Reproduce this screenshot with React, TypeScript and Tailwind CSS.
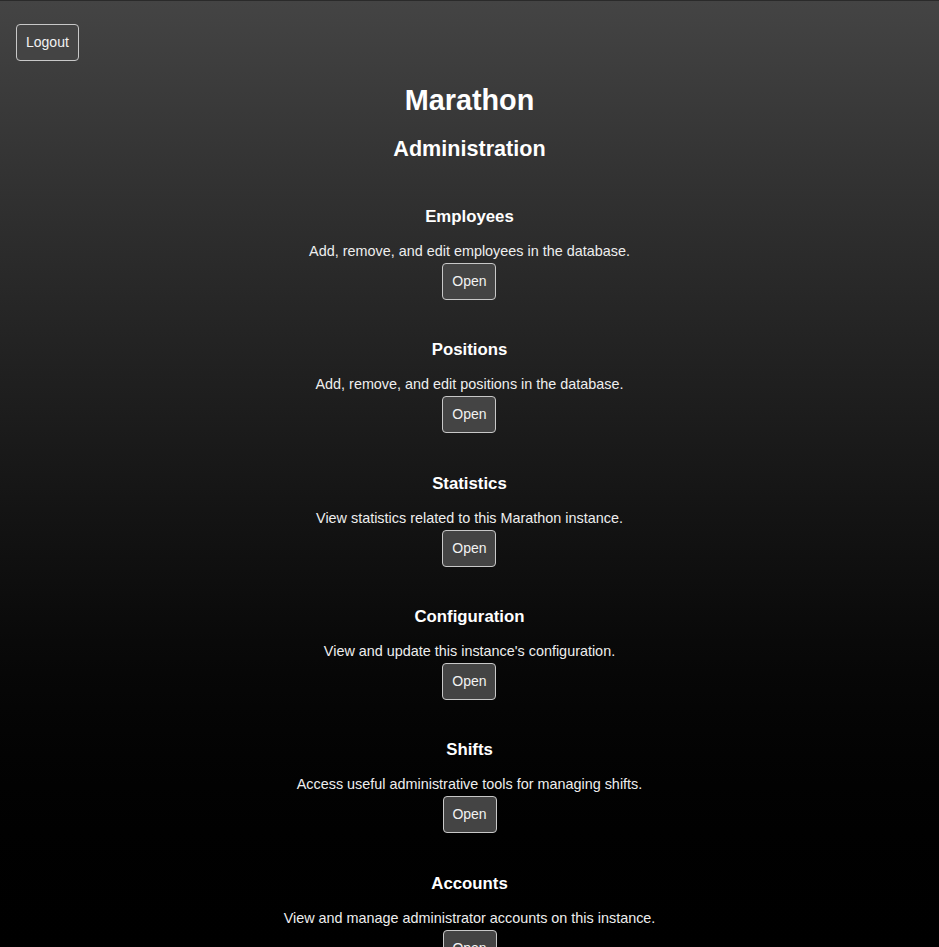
import React from 'react';

type Tool = {
  title: string;
  description: string;
};

const tools: Tool[] = [
  { title: 'Employees', description: 'Add, remove, and edit employees in the database.' },
  { title: 'Positions', description: 'Add, remove, and edit positions in the database.' },
  { title: 'Statistics', description: 'View statistics related to this Marathon instance.' },
  { title: 'Configuration', description: "View and update this instance's configuration." },
  { title: 'Shifts', description: 'Access useful administrative tools for managing shifts.' },
  { title: 'Accounts', description: 'View and manage administrator accounts on this instance.' },
];

export default function App() {
  return (
    <div className="min-h-screen border-t border-[#2a2a2a] bg-linear-to-b from-[#444444] to-black px-4 pt-[23px] pb-10 font-['Liberation_Sans',Arial,sans-serif] text-white">
      <button className="h-[37px] rounded-[4px] border border-[#c8c8c8] bg-[#444444] px-[9px] text-[14px] text-[#f2f2f2]">
        Logout
      </button>
      <h1 className="mt-[23px] text-center text-[28.8px] leading-[33px] font-bold">Marathon</h1>
      <h2 className="mt-[19px] text-center text-[21.6px] leading-[25px] font-bold">Administration</h2>
      <div className="mt-[46px] flex flex-col items-center gap-[40.33px]">
        {tools.map((tool, i) => (
          <div key={i} className="flex flex-col items-center">
            <h3 className="text-[16.8px] leading-[19px] font-bold">{tool.title}</h3>
            <p className="mt-[17px] text-[14.4px] leading-[17px] text-[#eeeeee]">{tool.description}</p>
            <button className="mt-[3px] h-[37px] w-[54px] rounded-[4px] border border-[#c8c8c8] bg-[#444444] text-[14px] text-[#f2f2f2]">
              Open
            </button>
          </div>
        ))}
      </div>
    </div>
  );
}
